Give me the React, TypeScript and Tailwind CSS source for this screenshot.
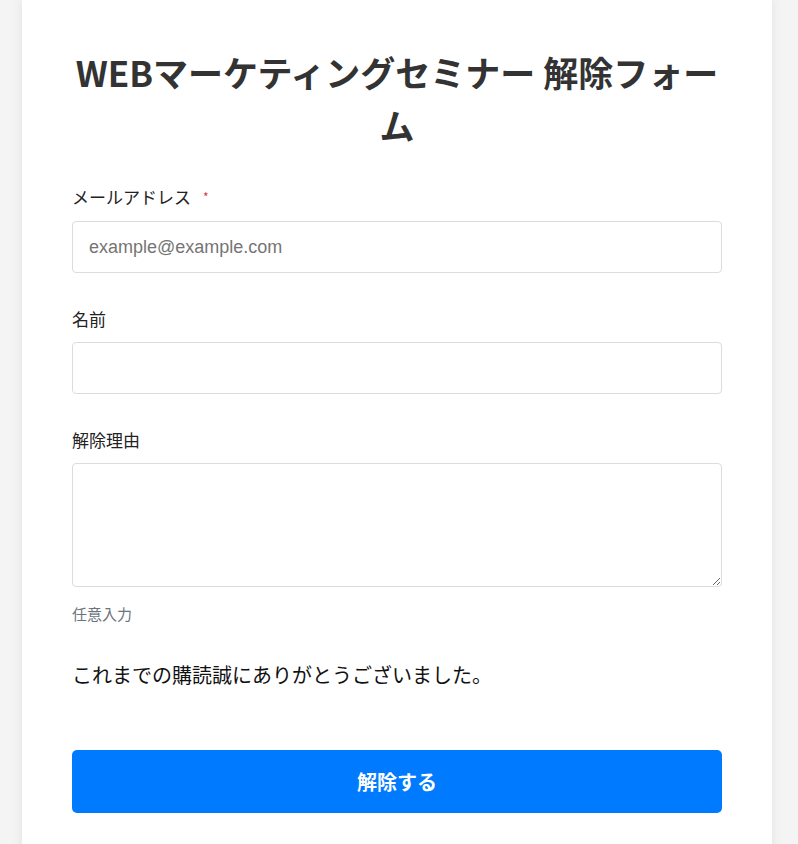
export default function App() {
  return (
    <div className="min-h-[844px] bg-[#f4f4f4] font-['Noto_Sans_CJK_JP','Noto_Sans',sans-serif]">
      <div className="ml-[22px] w-[750px] bg-white px-[50px] pt-[45px] pb-[40px] shadow-[0_0_10px_rgba(0,0,0,0.08)]">
        <h1 className="text-center text-[35px] font-bold leading-[53px] text-[#333]">
          WEBマーケティングセミナー 解除フォーム
        </h1>

        <form className="mt-[33px]" onSubmit={(e) => e.preventDefault()}>
          <div className="mb-[33px]">
            <label className="mb-3 block text-[17px] leading-[25px] text-[#222]">
              メールアドレス
              <span className="ml-[12px] align-top text-[12px] text-[#dc3545]">*</span>
            </label>
            <input
              type="email"
              placeholder="example@example.com"
              className="block h-[52px] w-full rounded-[4px] border border-[#dcdcdc] px-4 font-['Liberation_Sans',sans-serif] text-[18px] text-[#333] outline-none placeholder:text-[#757575]"
            />
          </div>

          <div className="mb-[33px]">
            <label className="mb-[11px] block text-[17px] leading-[25px] text-[#222]">名前</label>
            <input
              type="text"
              className="block h-[52px] w-full rounded-[4px] border border-[#dcdcdc] px-4 text-[18px] text-[#333] outline-none"
            />
          </div>

          <div>
            <label className="mb-[11px] block text-[17px] leading-[25px] text-[#222]">解除理由</label>
            <textarea className="block h-[124px] w-full rounded-[4px] border border-[#dcdcdc] px-4 py-3 text-[16px] text-[#333] outline-none" />
            <p className="mt-[16px] text-[15px] leading-[22px] text-[#6c757d]">任意入力</p>
          </div>

          <p className="mt-[35px] text-[20px] leading-[30px] text-[#111]">
            これまでの購読誠にありがとうございました。
          </p>

          <button
            type="submit"
            className="mt-[60px] block h-[63px] w-full rounded-[5px] bg-[#007bff] text-[20px] font-bold text-white"
          >
            解除する
          </button>
        </form>
      </div>
    </div>
  );
}
